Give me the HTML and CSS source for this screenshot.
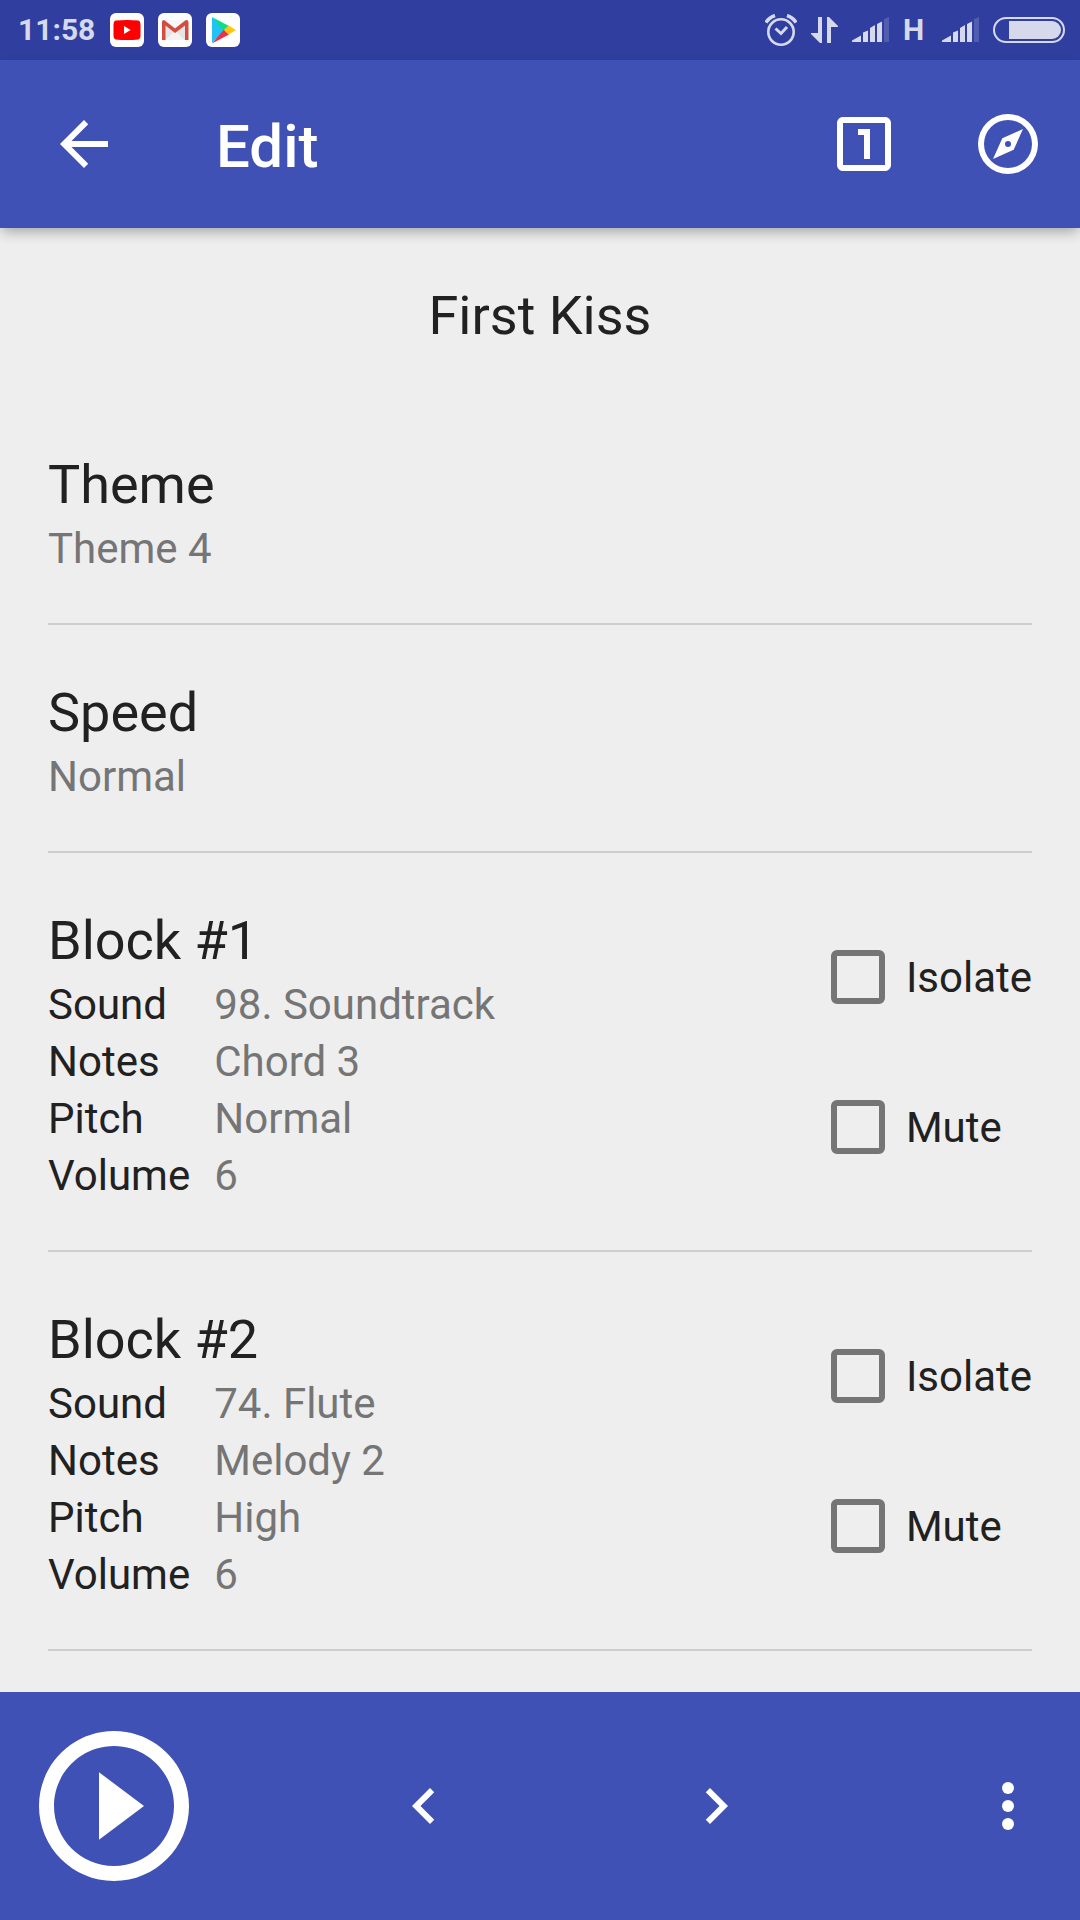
FILE: index.html
```html
<!DOCTYPE html>
<html lang="en">
<head>
    <meta charset="UTF-8">
    <meta name="viewport" content="width=device-width, initial-scale=1.0">
    <title>Edit - First Kiss</title>
    <link rel="stylesheet" href="styles.css">
</head>
<body>
    <!-- Status bar -->
    <div class="status-bar">
        <span class="clock">11:58</span>
        <svg class="app-icon" viewBox="0 0 34 34">
            <rect width="34" height="34" rx="6" fill="#fff"/>
            <path d="M5.500 7.500Q17 6.500 28.500 7.500Q30.500 8 30.500 11V23Q30.500 26 28.500 26.500Q17 27.500 5.500 26.500Q3.500 26 3.500 23V11Q3.500 8 5.500 7.500Z" fill="#f00"/>
            <path d="M14 13v8l6.700-4z" fill="#fff"/>
        </svg>
        <svg class="app-icon" viewBox="0 0 34 34">
            <rect width="34" height="34" rx="6" fill="#fff"/>
            <path d="M5 7h24v20H5z" fill="#e4e4e4"/>
            <path d="M7 27l10-9 10 9z" fill="#f3f3f3"/>
            <path d="M7 7h20l-10 8z" fill="#f7f7f7"/>
            <path d="M4 9Q4 7 6 7L17 15.500 28 7Q30.500 7 30.500 9V27H27V12.500L17 20 7.500 12.500V27H4z" fill="#d54b3d"/>
        </svg>
        <svg class="app-icon" viewBox="0 0 34 34">
            <rect width="34" height="34" rx="6" fill="#fff"/>
            <path d="M6 4v26l13-13z" fill="#1fc4f4"/>
            <path d="M6 4l17 9-5 5z" fill="#10dc83"/>
            <path d="M6 30.500l17-9-5-5z" fill="#e8324f"/>
            <path d="M22.500 12.500L30 17l-7.500 4.500L18 17z" fill="#ffc80a"/>
        </svg>

        <div class="indicators">
            <svg width="32" height="32" viewBox="0 0 32 32" fill="none" stroke="currentColor" stroke-width="2.600">
                <circle cx="16" cy="18" r="12.700"/>
                <path d="M10.500 14.500l5.500 5 6-6.500" stroke-width="3"/>
                <path d="M1 8.500Q4 3.500 10 1.500M31 8.500Q28 3.500 22 1.500" stroke-width="3.500"/>
            </svg>
            <svg width="27" height="26" viewBox="0 0 27 26" fill="currentColor">
                <path d="M7 0h4v26H9L0 17v-1h7z"/>
                <path d="M16 0h2l9 9v1h-7v16h-4z"/>
            </svg>
            <svg class="signal" viewBox="0 0 37 26" fill="currentColor">
                <path d="M0 23.500l9-5V25H0zM11 15.500l5-2V25h-5zM18 11l5-3v17h-5zM25 7l5-2.500V25h-5z"/>
                <path d="M32 2l5-2v25h-5z" opacity=".2"/>
            </svg>
            <span class="network">H</span>
            <svg class="signal" viewBox="0 0 37 26" fill="currentColor">
                <path d="M0 23.500l9-5V25H0zM11 15.500l5-2V25h-5zM18 11l5-3v17h-5zM25 7l5-2.500V25h-5z"/>
                <path d="M32 2l5-2v25h-5z" opacity=".2"/>
            </svg>
            <svg width="72" height="26" viewBox="0 0 72 26">
                <rect x="1" y="1" width="70" height="24" rx="12" fill="none" stroke="currentColor" stroke-width="2"/>
                <path d="M16 4h43a9 9 0 0 1 0 18H16z" fill="currentColor"/>
            </svg>
        </div>
    </div>

    <!-- App bar -->
    <header class="app-bar">
        <button class="icon-button" aria-label="Back">
            <svg class="icon" viewBox="0 0 24 24"><path d="M20 11H7.830l5.590-5.590L12 4l-8 8 8 8 1.410-1.410L7.830 13H20v-2z"/></svg>
        </button>
        <h1>Edit</h1>
        <button class="icon-button" aria-label="Play once">
            <svg class="icon" viewBox="0 0 24 24"><path d="M14 17h-2V9h-2V7h4v10zM19 3H5c-1.100 0-2 .9-2 2v14c0 1.100.9 2 2 2h14c1.100 0 2-.9 2-2V5c0-1.100-.9-2-2-2zm0 16H5V5h14v14z"/></svg>
        </button>
        <button class="icon-button" aria-label="Explore">
            <svg class="icon" viewBox="0 0 24 24" fill-rule="evenodd">
                <path d="M12 2a10 10 0 1 0 0 20 10 10 0 0 0 0-20zm0 2a8 8 0 1 1 0 16 8 8 0 0 1 0-16z"/>
                <path d="M7 17l6.900-3.100L17 7l-6.900 3.100zM12 11a1 1 0 1 1 0 2 1 1 0 0 1 0-2z"/>
            </svg>
        </button>
    </header>

    <main>
        <h2 class="song-title">First Kiss</h2>

        <button class="item setting">
            <span class="item-title">Theme</span>
            <span class="item-value">Theme 4</span>
        </button>
        <button class="item setting">
            <span class="item-title">Speed</span>
            <span class="item-value">Normal</span>
        </button>

        <section class="item block">
            <div>
                <h3 class="item-title">Block #1</h3>
                <dl>
                    <dt>Sound</dt><dd>98. Soundtrack</dd>
                    <dt>Notes</dt><dd>Chord 3</dd>
                    <dt>Pitch</dt><dd>Normal</dd>
                    <dt>Volume</dt><dd>6</dd>
                </dl>
            </div>
            <div class="options">
                <label for="isolate1"><input type="checkbox" id="isolate1">Isolate</label>
                <label for="mute1"><input type="checkbox" id="mute1">Mute</label>
            </div>
        </section>

        <section class="item block">
            <div>
                <h3 class="item-title">Block #2</h3>
                <dl>
                    <dt>Sound</dt><dd>74. Flute</dd>
                    <dt>Notes</dt><dd>Melody 2</dd>
                    <dt>Pitch</dt><dd>High</dd>
                    <dt>Volume</dt><dd>6</dd>
                </dl>
            </div>
            <div class="options">
                <label for="isolate2"><input type="checkbox" id="isolate2">Isolate</label>
                <label for="mute2"><input type="checkbox" id="mute2">Mute</label>
            </div>
        </section>
    </main>

    <!-- Player controls -->
    <footer class="player">
        <button class="icon-button play" aria-label="Play">
            <svg class="icon" viewBox="0 0 24 24"><path d="M10 16.500l6-4.500-6-4.500v9zM12 2C6.480 2 2 6.480 2 12s4.480 10 10 10 10-4.480 10-10S17.520 2 12 2zm0 18c-4.410 0-8-3.590-8-8s3.590-8 8-8 8 3.590 8 8-3.590 8-8 8z"/></svg>
        </button>
        <button class="icon-button" aria-label="Previous">
            <svg class="icon" viewBox="0 0 24 24"><path d="M15.410 7.410L14 6l-6 6 6 6 1.410-1.410L10.830 12z"/></svg>
        </button>
        <button class="icon-button" aria-label="Next">
            <svg class="icon" viewBox="0 0 24 24"><path d="M10 6L8.590 7.410 13.170 12l-4.580 4.590L10 18l6-6z"/></svg>
        </button>
        <button class="icon-button" aria-label="More options">
            <svg class="icon" viewBox="0 0 24 24"><circle cx="12" cy="6" r="2"/><circle cx="12" cy="12" r="2"/><circle cx="12" cy="18" r="2"/></svg>
        </button>
    </footer>
</body>
</html>
```

FILE: styles.css
```css
* {
    box-sizing: border-box;
}

body {
    font-family: Roboto, sans-serif;
    margin: 0;
    background: #eeeeee;
    color: #212121;
    font-size: 42px;
    line-height: 57px;
    display: flex;
    flex-direction: column;
    min-height: 100vh;
}

h1, h2, h3, dl, dd {
    margin: 0;
    font-weight: 400;
}

button {
    font: inherit;
    color: inherit;
    background: none;
    border: none;
    padding: 0;
}

svg {
    display: block;
    flex-shrink: 0;
}

/* Status Bar */
.status-bar {
    display: flex;
    align-items: center;
    gap: 14px;
    height: 60px;
    padding: 0 15px 0 18px;
    background: #303f9f;
    color: #d6d9ec;
    font-size: 30px;
    font-weight: 700;
    line-height: 36px;
}

.clock {
    min-width: 78px;
}

.app-icon {
    width: 34px;
    height: 34px;
}

.indicators {
    display: flex;
    align-items: center;
    gap: 14px;
    margin-left: auto;
}

.network {
    width: 25px;
}

.signal {
    width: 37px;
    height: 26px;
}

/* App Bar */
.app-bar {
    display: flex;
    align-items: center;
    gap: 72px;
    height: 168px;
    padding: 0 36px 0 48px;
    background: #3f51b5;
    color: #fff;
    box-shadow: 0 6px 12px -2px rgba(0, 0, 0, 0.3);
}

.app-bar h1 {
    flex: 1;
    padding: 5px 0 0 24px;
    font-size: 60px;
    font-weight: 500;
    line-height: 72px;
}

.icon-button {
    width: 72px;
    height: 72px;
}

.icon {
    width: 100%;
    height: 100%;
    fill: currentColor;
}

/* Content */
main {
    flex: 1;
    padding: 0 48px;
}

.song-title {
    padding: 53px 0 46px;
    font-size: 54px;
    line-height: 70px;
    text-align: center;
}

.item {
    width: 100%;
    padding: 53px 0 46px;
    border-bottom: 2px solid #cecece;
    text-align: left;
}

.item-title {
    display: block;
    font-size: 54px;
    line-height: 70px;
}

.item-value {
    display: block;
    color: #757575;
}

.block {
    display: flex;
    justify-content: space-between;
    align-items: center;
}

dl {
    display: grid;
    grid-template-columns: max-content 1fr;
    column-gap: 24px;
}

dd {
    color: #757575;
}

.options {
    margin-top: -6px;
}

.options label {
    display: flex;
    align-items: center;
    gap: 21px;
    height: 150px;
}

input[type="checkbox"] {
    appearance: none;
    width: 54px;
    height: 54px;
    margin: 0;
    border: 6px solid #757575;
    border-radius: 6px;
}

input[type="checkbox"]:checked {
    background: #3f51b5;
    border-color: #3f51b5;
}

/* Player */
.player {
    display: flex;
    align-items: center;
    justify-content: space-between;
    height: 228px;
    padding: 0 36px 0 24px;
    background: #3f51b5;
    color: #fff;
}

.play {
    width: 180px;
    height: 180px;
    margin-right: -36px;
}
```
